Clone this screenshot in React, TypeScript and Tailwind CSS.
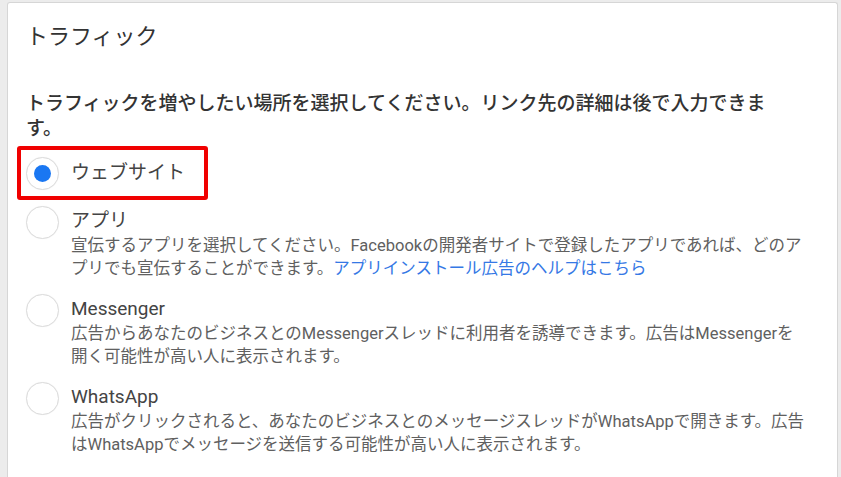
import React from "react";

type Option = {
    label: string;
    desc?: React.ReactNode;
    selected?: boolean;
};

const options: Option[] = [
    { label: "ウェブサイト", selected: true },
    {
        label: "アプリ",
        desc: (
            <>
                宣伝するアプリを選択してください。Facebookの開発者サイトで登録したアプリであれば、どのア
                <br />
                プリでも宣伝することができます。
                <span className="text-[#3578e5]">アプリインストール広告のヘルプはこちら</span>
            </>
        ),
    },
    {
        label: "Messenger",
        desc: (
            <>
                広告からあなたのビジネスとのMessengerスレッドに利用者を誘導できます。広告はMessengerを
                <br />
                開く可能性が高い人に表示されます。
            </>
        ),
    },
    {
        label: "WhatsApp",
        desc: (
            <>
                広告がクリックされると、あなたのビジネスとのメッセージスレッドがWhatsAppで開きます。広告
                <br />
                はWhatsAppでメッセージを送信する可能性が高い人に表示されます。
            </>
        ),
    },
];

function Radio({ selected }: { selected?: boolean }) {
    return (
        <span className="flex h-[33px] w-[33px] shrink-0 items-center justify-center rounded-full border border-[#dcdcdc] bg-white shadow-[0_0_1px_rgba(0,0,0,0.08)]">
            {selected && <span className="h-[17px] w-[17px] rounded-full bg-[#1a77f2]" />}
        </span>
    );
}

function OptionRow({ option }: { option: Option }) {
    if (!option.desc) {
        return (
            <div className="relative mb-[2px] flex h-[34px] items-center gap-[12px]">
                <Radio selected={option.selected} />
                <span className="text-[19px] leading-[26px] text-[#444]">{option.label}</span>
                {/* red annotation box */}
                <span className="pointer-events-none absolute -left-[9px] -top-[10px] h-[54px] w-[191px] rounded-[3px] border-4 border-[#f00000]" />
            </div>
        );
    }
    return (
        <div className="flex items-start gap-[12px]">
            <div className="-mt-[2px]">
                <Radio selected={option.selected} />
            </div>
            <div className="flex flex-col">
                <span className="text-[19px] leading-[26px] text-[#444]">{option.label}</span>
                <p className="whitespace-nowrap text-[16.5px] leading-[23px] text-[#606060]">{option.desc}</p>
            </div>
        </div>
    );
}

export default function App() {
    return (
        <div
            className="flex h-[477px] w-[841px] overflow-hidden bg-[#ececec] pl-[7px] pr-[3px] pt-[2px]"
            style={{ fontFamily: 'Roboto, "Noto Sans CJK JP", sans-serif' }}
        >
            <div className="flex-1 rounded-t-[3px] border-l border-r border-t border-[#d6d6d6] bg-white pl-[18px] pt-[20px]">
                <h1 className="text-[22px] leading-[28px] text-[#333]">トラフィック</h1>
                <p className="mt-[40px] w-[770px] text-[19px] font-medium leading-[25px] text-[#333]">
                    トラフィックを増やしたい場所を選択してください。リンク先の詳細は後で入力できます。
                </p>
                <div className="mt-[15px] flex w-[788px] flex-col gap-[16px]">
                    {options.map((o) => (
                        <OptionRow key={o.label} option={o} />
                    ))}
                </div>
            </div>
        </div>
    );
}
